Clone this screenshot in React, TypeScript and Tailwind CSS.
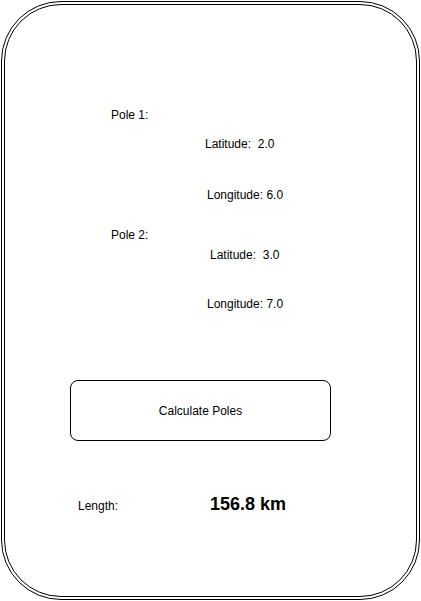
import React from 'react';

const Coord: React.FC<{ label: string; value: string; offset: string; gap: string }> = ({ label, value, offset, gap }) => (
  <div className={`${offset} ${gap} h-4 leading-4 text-[12px] whitespace-pre`}>
    {label} {value}
  </div>
);

const App: React.FC = () => {
  return (
    <div className="w-[421px] h-[601px] p-px bg-white text-black" style={{ fontFamily: '"Liberation Sans", Arial, sans-serif' }}>
      <div className="w-[419px] h-[599px] border-4 border-double border-black rounded-[60px] flex flex-col">
        {/* pole 1 */}
        <div className="mt-[102px] pl-[106px] h-4 leading-4 text-[12px]">Pole 1:</div>
        <Coord label="Latitude: " value="2.0" offset="pl-[200px]" gap="mt-[13px]" />
        <Coord label="Longitude:" value="6.0" offset="pl-[202px]" gap="mt-[35px]" />

        {/* pole 2 */}
        <div className="mt-[24px] pl-[106px] h-4 leading-4 text-[12px]">Pole 2:</div>
        <Coord label="Latitude: " value="3.0" offset="pl-[205px]" gap="mt-[4px]" />
        <Coord label="Longitude:" value="7.0" offset="pl-[202px]" gap="mt-[33px]" />

        <button className="mt-[68px] ml-[65px] w-[261px] h-[61px] border border-black rounded-[8px] text-[12px] leading-4 flex items-center justify-center">
          Calculate Poles
        </button>

        <div className="mt-[54px] pl-[73px] flex items-baseline">
          <span className="w-[132px] text-[12px] leading-4">Length:</span>
          <span className="text-[18px] leading-[18px] font-bold">156.8 km</span>
        </div>
      </div>
    </div>
  );
};

export default App;
